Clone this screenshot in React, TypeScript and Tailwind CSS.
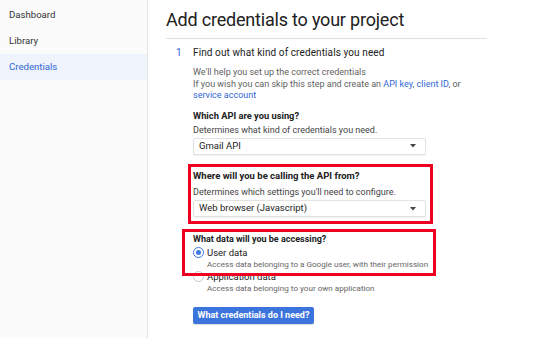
import React from "react";

const font = { fontFamily: "Roboto, 'Noto Sans', Arial, sans-serif" };

function Select({ label }: { label: string }) {
  return (
    <div className="flex h-[17px] w-[233px] items-center justify-between rounded-[2px] border border-[#e2e2e2] bg-white pl-[5px] pr-[9px] text-[9.5px] text-[#212121] shadow-[0_1px_1px_rgba(0,0,0,0.06)]">
      <span>{label}</span>
      <svg width="6" height="4" viewBox="0 0 6 4">
        <path d="M0 0 L6 0 L3 3.5 Z" fill="#444" />
      </svg>
    </div>
  );
}

function Radio({ checked }: { checked: boolean }) {
  return checked ? (
    <div className="flex h-[11px] w-[11px] items-center justify-center rounded-full border-[1.5px] border-[#3b78e7] bg-white">
      <div className="h-[5px] w-[5px] rounded-full bg-[#3b78e7]" />
    </div>
  ) : (
    <div className="h-[11px] w-[11px] rounded-full border border-[#c8c8c8] bg-white" />
  );
}

export default function App() {
  return (
    <div className="flex h-[338px] w-[550px] overflow-hidden bg-white" style={font}>
      <div className="h-full w-[148px] shrink-0 border-r border-[#e4e4e4] bg-[#fbfbfb] pt-[2px] text-[9.6px]">
        <div className="flex h-[26px] items-center pl-[9px] text-[#333]">Dashboard</div>
        <div className="flex h-[26px] items-center pl-[9px] text-[#333]">Library</div>
        <div className="flex h-[26px] items-center bg-[#eef3fc] pl-[9px] text-[#3367d6]">Credentials</div>
      </div>
      <div className="pl-[18px]">
        <div className="w-[321px] border-b border-[#e0e0e0] pb-[6px] pt-[8px] text-[18px] leading-[24px] tracking-[-0.2px] text-[#212121]">
          Add credentials to your project
        </div>
        <div className="mt-[6px] flex">
          <div className="w-[27px] pl-[10px] text-[10px] leading-[16px] text-[#3367d6]">1</div>
          <div className="flex flex-col">
            <div className="text-[10px] leading-[16px] tracking-[0.1px] text-[#212121]">Find out what kind of credentials you need</div>
            <div className="mt-[6px] text-[9px] leading-[11.5px] text-[#5f5f5f]">
              <div>We'll help you set up the correct credentials</div>
              <div>
                If you wish you can skip this step and create an{" "}
                <span className="text-[#3367d6]">API key</span>,{" "}
                <span className="text-[#3367d6]">client ID</span>, or
              </div>
              <div className="text-[#3367d6]">service account</div>
            </div>
            <div className="mt-[7px] text-[9.3px] font-bold leading-[13px] text-[#212121]">Which API are you using?</div>
            <div className="mt-[2px] text-[9px] leading-[13px] text-[#444]">Determines what kind of credentials you need.</div>
            <div className="mt-[1px]">
              <Select label="Gmail API" />
            </div>
            <div className="ml-[-5px] mt-[9px] w-[245px] border-[3px] border-[#ee0022] pb-[4px] pl-[2px] pt-[2px]">
              <div className="text-[9.5px] font-bold leading-[13px] text-[#212121]">Where will you be calling the API from?</div>
              <div className="mt-[4px] text-[9px] leading-[13px] text-[#444]">Determines which settings you'll need to configure.</div>
              <div className="mt-[1.5px]">
                <Select label="Web browser (Javascript)" />
              </div>
            </div>
            <div className="relative z-10 ml-[-11px] mt-[5px] w-[254px] border-[3px] border-[#ee0022] pb-[3px] pl-[8px] pt-[1px]">
              <div className="text-[9px] font-bold leading-[13px] text-[#212121]">What data will you be accessing?</div>
              <div className="flex">
                <div className="flex h-[13px] w-[14px] items-center">
                  <Radio checked />
                </div>
                <div>
                  <div className="text-[9.5px] leading-[13px] text-[#212121]">User data</div>
                  <div className="whitespace-nowrap text-[8.1px] leading-[11px] text-[#666]">Access data belonging to a Google user, with their permission</div>
                </div>
              </div>
            </div>
            <div className="mt-[-6px] flex">
              <div className="flex h-[13px] w-[14px] items-center">
                <Radio checked={false} />
              </div>
              <div>
                <div className="text-[9.5px] leading-[13px] text-[#212121]">Application data</div>
                <div className="whitespace-nowrap text-[8.1px] leading-[11px] text-[#666]">Access data belonging to your own application</div>
              </div>
            </div>
            <div className="mt-[7px]">
              <button className="h-[17px] w-[121px] whitespace-nowrap rounded-[2px] bg-[#3b74dc] text-[9px] font-bold text-white shadow-[0_1px_1px_rgba(0,0,0,0.15)]">
                What credentials do I need?
              </button>
            </div>
          </div>
        </div>
      </div>
    </div>
  );
}
